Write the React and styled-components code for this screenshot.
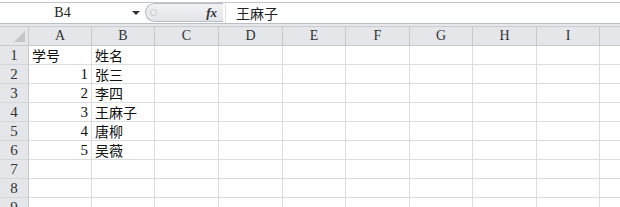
import styled, { createGlobalStyle } from "styled-components";

const GlobalStyle = createGlobalStyle`
  body {
    margin: 0;
    background: #ffffff;
    overflow: hidden;
    font-family: "Liberation Serif", "Noto Sans CJK SC", serif;
  }
`;

const COLS = ["A", "B", "C", "D", "E", "F", "G", "H", "I", ""];
const WIDTHS = [63, 63, 64, 64, 63, 64, 63, 64, 63, 64];

const ROWS = [
  ["学号", "姓名"],
  [1, "张三"],
  [2, "李四"],
  [3, "王麻子"],
  [4, "唐柳"],
  [5, "吴薇"],
  [null, null],
  [null, null],
  [null, null],
];

const Page = styled.div`
  width: 620px;
  height: 207px;
  overflow: hidden;
  background: #ffffff;
`;

const FormulaBar = styled.div`
  display: flex;
  height: 20px;
  margin-top: 2px;
  border-top: 1px solid #c3c6cc;
  border-bottom: 1px solid #babec5;
  background: #ffffff;
`;

const BarGap = styled.div`
  height: 2px;
  background: #e6e8eb;
  border-bottom: 1px solid #c9ccd1;
`;

const NameBox = styled.div`
  display: flex;
  align-items: center;
  width: 145px;
  flex-shrink: 0;
`;

const NameText = styled.span`
  width: 125px;
  text-align: center;
  font-size: 14px;
  color: #222;
`;

const Arrow = styled.span`
  width: 0;
  height: 0;
  margin-left: 7px;
  border-left: 4px solid transparent;
  border-right: 4px solid transparent;
  border-top: 4px solid #333;
`;

const FxPill = styled.div`
  display: flex;
  align-items: center;
  justify-content: space-between;
  width: 78px;
  flex-shrink: 0;
  box-sizing: border-box;
  height: 19px;
  padding: 0 4px;
  border: 1px solid #b7bbc2;
  border-right: none;
  border-radius: 10px 0 0 10px;
  background: linear-gradient(#f1f2f4, #e2e4e8);
`;

const Dot = styled.span`
  width: 5px;
  height: 5px;
  border-radius: 50%;
  border: 1px solid #c4c7cc;
  background: #eceef0;
`;

const Fx = styled.span`
  font-family: "Liberation Serif", serif;
  font-style: italic;
  font-weight: bold;
  font-size: 13px;
  color: #333;
  padding-right: 2px;
`;

const FormulaInput = styled.div`
  flex: 1;
  display: flex;
  align-items: center;
  margin-left: 2px;
  padding-left: 10px;
  border-left: 1px solid #dfe1e5;
  font-family: "Noto Sans CJK SC", sans-serif;
  font-size: 14px;
  color: #222;
`;

const Grid = styled.div`
  display: grid;
  grid-template-columns: 29px ${WIDTHS.map((w) => w + "px").join(" ")};
  grid-auto-rows: 19px;
`;

const Corner = styled.div`
  position: relative;
  box-sizing: border-box;
  background: #e4e6ea;
  border-right: 1px solid #c6c9ce;
  border-bottom: 1px solid #c6c9ce;

  &::after {
    content: "";
    position: absolute;
    right: 3px;
    bottom: 3px;
    width: 0;
    height: 0;
    border-left: 11px solid transparent;
    border-bottom: 11px solid #c3c6cb;
  }
`;

const ColHead = styled.div`
  display: flex;
  align-items: center;
  justify-content: center;
  box-sizing: border-box;
  background: #e4e6ea;
  border-right: 1px solid #c6c9ce;
  border-bottom: 1px solid #c6c9ce;
  font-size: 14px;
  color: #333;
`;

const RowHead = styled.div`
  display: flex;
  align-items: center;
  justify-content: center;
  box-sizing: border-box;
  background: #e4e6ea;
  border-right: 1px solid #c6c9ce;
  border-bottom: 1px solid #d3d6da;
  font-size: 15px;
  color: #333;
`;

const Cell = styled.div`
  display: flex;
  align-items: center;
  justify-content: ${({ $num }) => ($num ? "flex-end" : "flex-start")};
  box-sizing: border-box;
  padding: 0 3px;
  border-right: 1px solid #dadcdd;
  border-bottom: 1px solid #dadcdd;
  white-space: nowrap;
  overflow: hidden;
  font-family: ${({ $num }) =>
    $num ? '"Liberation Serif", serif' : '"Noto Sans CJK SC", sans-serif'};
  font-size: ${({ $num }) => ($num ? "15px" : "14px")};
  color: #111;
`;

export default function App() {
  return (
    <Page>
      <GlobalStyle />
      <FormulaBar>
        <NameBox>
          <NameText>B4</NameText>
          <Arrow />
        </NameBox>
        <FxPill>
          <Dot />
          <Fx>fx</Fx>
        </FxPill>
        <FormulaInput>王麻子</FormulaInput>
      </FormulaBar>
      <BarGap />
      <Grid>
        <Corner />
        {COLS.map((c, i) => (
          <ColHead key={"c" + i}>{c}</ColHead>
        ))}
        {ROWS.map((row, r) => [
          <RowHead key={"h" + r}>{r + 1}</RowHead>,
          ...COLS.map((c, i) => {
            const v = i < 2 ? row[i] : null;
            return (
              <Cell key={i + "-" + r} $num={typeof v === "number"}>
                {v}
              </Cell>
            );
          }),
        ])}
      </Grid>
    </Page>
  );
}
